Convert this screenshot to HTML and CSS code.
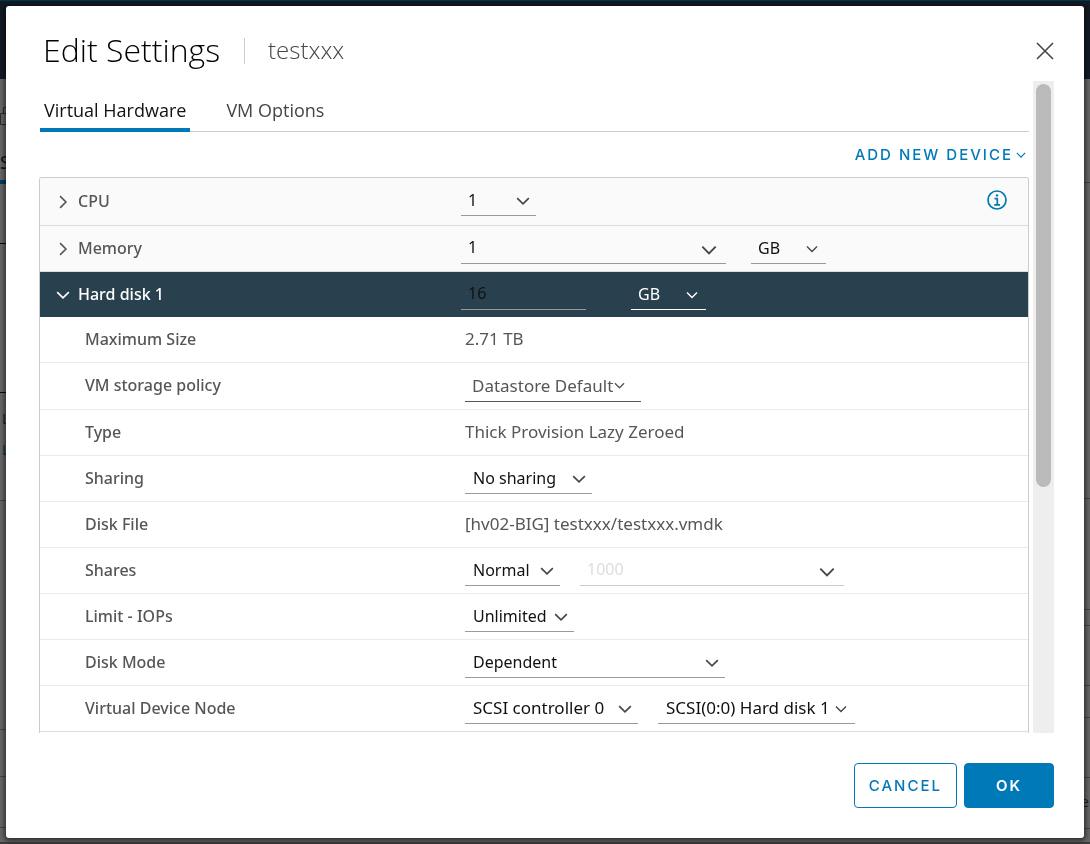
FILE: index.html
```html
<!DOCTYPE html>
<html lang="en">
<head>
<meta charset="utf-8">
<title>Edit Settings</title>
<link rel="stylesheet" href="styles.css">
</head>
<body>
<svg class="defs" aria-hidden="true">
  <symbol id="chevron" viewBox="0 0 12 12"><path d="M1 3.5l5 5 5-5" fill="none" stroke="currentColor" stroke-width="1.4"/></symbol>
</svg>

<div class="page" aria-hidden="true">
  <div class="page-header"></div>
  <div class="page-body">
    <div class="page-left">
      <svg class="page-icon" viewBox="0 0 12 24"><path d="M.5 9.5h12v11H.5zM3.5 9V3.5h9" fill="none" stroke="#2c2c2c"/></svg>
      <div class="page-tab">S</div>
      <div class="page-block rule-dark h-60"></div>
      <div class="page-block rule-dark h-149"></div>
      <div class="page-text">L</div>
      <div class="page-text page-link">L</div>
      <div class="page-block h-46"></div>
      <div class="page-block h-229"></div>
      <div class="page-block h-47"></div>
      <div class="page-block h-51"></div>
    </div>
    <div class="page-right">
      <div class="page-block h-104"></div>
      <div class="page-block h-316"></div>
      <div class="page-block h-111"></div>
      <div class="page-block h-16"></div>
      <div class="page-block h-60"></div>
      <div class="page-block h-32"></div>
      <div class="page-block h-60"></div>
      <div class="page-block page-cell h-51">e</div>
    </div>
  </div>
</div>

<div class="modal" role="dialog" aria-labelledby="title">
  <header class="modal-header">
    <h1 id="title" class="title">Edit Settings</h1>
    <span class="subtitle">testxxx</span>
    <button class="close" aria-label="Close">
      <svg viewBox="0 0 18 18"><path d="M1 1l16 16M17 1L1 17" fill="none" stroke="currentColor" stroke-width="1.6"/></svg>
    </button>
  </header>

  <div class="modal-body">
    <div class="content">
      <nav class="tabs">
        <button class="tab active">Virtual Hardware</button>
        <button class="tab">VM Options</button>
      </nav>
      <div class="toolbar">
        <button class="add">ADD NEW DEVICE<svg class="chev"><use href="#chevron"/></svg></button>
      </div>

      <div class="settings">
        <div class="row head cpu">
          <button class="expander" aria-label="Expand CPU"><svg class="chev side"><use href="#chevron"/></svg></button>
          <label class="name" for="cpu">CPU</label>
          <div class="value">
            <span class="field w-unit"><select id="cpu"><option>1</option></select><svg class="chev"><use href="#chevron"/></svg></span>
            <button class="info" aria-label="CPU information">
              <svg viewBox="0 0 20 20"><circle cx="10" cy="10" r="9" fill="none" stroke="currentColor" stroke-width="1.7"/><circle cx="10" cy="5.4" r="1.2" fill="currentColor"/><path d="M7.5 8.7H10.3V14.7M7.2 14.8H13" fill="none" stroke="currentColor" stroke-width="1.7"/></svg>
            </button>
          </div>
        </div>
        <div class="row head">
          <button class="expander" aria-label="Expand Memory"><svg class="chev side"><use href="#chevron"/></svg></button>
          <label class="name" for="memory">Memory</label>
          <div class="value">
            <span class="field combo w-memory"><input id="memory" type="text" value="1"><svg class="chev"><use href="#chevron"/></svg></span>
            <span class="field small w-unit"><select aria-label="Memory unit"><option>GB</option></select><svg class="chev"><use href="#chevron"/></svg></span>
          </div>
        </div>
        <div class="row head open">
          <button class="expander" aria-label="Collapse Hard disk 1"><svg class="chev"><use href="#chevron"/></svg></button>
          <label class="name" for="disk">Hard disk 1</label>
          <div class="value">
            <span class="field combo w-disk"><input id="disk" type="text" value="16"></span>
            <span class="field small w-unit"><select aria-label="Disk unit"><option>GB</option></select><svg class="chev"><use href="#chevron"/></svg></span>
          </div>
        </div>
        <div class="row">
          <span class="name">Maximum Size</span>
          <div class="value"><span class="text">2.71 TB</span></div>
        </div>
        <div class="row policy">
          <span class="name" id="policy">VM storage policy</span>
          <div class="value"><button class="dropdown w-policy" aria-describedby="policy">Datastore Default<svg class="chev"><use href="#chevron"/></svg></button></div>
        </div>
        <div class="row">
          <span class="name">Type</span>
          <div class="value"><span class="text">Thick Provision Lazy Zeroed</span></div>
        </div>
        <div class="row">
          <label class="name" for="sharing">Sharing</label>
          <div class="value"><span class="field w-sharing"><select id="sharing"><option>No sharing</option></select><svg class="chev"><use href="#chevron"/></svg></span></div>
        </div>
        <div class="row">
          <span class="name">Disk File</span>
          <div class="value"><span class="text">[hv02-BIG] testxxx/testxxx.vmdk</span></div>
        </div>
        <div class="row">
          <label class="name" for="shares">Shares</label>
          <div class="value">
            <span class="field w-shares"><select id="shares"><option>Normal</option></select><svg class="chev"><use href="#chevron"/></svg></span>
            <span class="field combo disabled w-amount"><input type="text" value="1000" aria-label="Shares value" disabled><svg class="chev"><use href="#chevron"/></svg></span>
          </div>
        </div>
        <div class="row">
          <label class="name" for="limit">Limit - IOPs</label>
          <div class="value"><span class="field w-limit"><select id="limit"><option>Unlimited</option></select><svg class="chev"><use href="#chevron"/></svg></span></div>
        </div>
        <div class="row">
          <label class="name" for="mode">Disk Mode</label>
          <div class="value"><span class="field w-mode"><select id="mode"><option>Dependent</option></select><svg class="chev"><use href="#chevron"/></svg></span></div>
        </div>
        <div class="row last">
          <label class="name" for="node">Virtual Device Node</label>
          <div class="value">
            <span class="field w-controller"><select id="node"><option>SCSI controller 0</option></select><svg class="chev"><use href="#chevron"/></svg></span>
            <span class="field small w-slot"><select aria-label="Device slot"><option>SCSI(0:0) Hard disk 1</option></select><svg class="chev"><use href="#chevron"/></svg></span>
          </div>
        </div>
      </div>
    </div>
    <div class="scrollbar"><div class="thumb"></div></div>
  </div>

  <footer class="modal-footer">
    <button class="btn">CANCEL</button>
    <button class="btn primary">OK</button>
  </footer>
</div>
</body>
</html>
```
FILE: styles.css
```css
* { box-sizing: border-box; }
body {
  margin: 0;
  height: 100vh;
  overflow: hidden;
  font-family: "Noto Sans", "Open Sans", sans-serif;
  font-size: 16px;
  line-height: 24px;
  color: #565656;
}
button, input, select { font: inherit; color: inherit; margin: 0; padding: 0; border: 0; background: none; border-radius: 0; outline: 0; }
.defs { position: absolute; width: 0; height: 0; }

/* dimmed page behind the dialog */
.page { height: 100vh; display: flex; flex-direction: column; background: #666; }
.page-header { height: 79px; flex: none; background: #121b24; border-top: 1px solid #00344f; }
.page-body { flex: 1; display: flex; justify-content: space-between; overflow: hidden; border-bottom: 2px solid #3c3c3c; }
.page-left { width: 50%; }
.page-right { width: 9px; }
.page-icon { display: block; width: 12px; height: 24px; margin: 25px 0 22px; }
.page-tab { width: 40px; height: 34px; color: #111; font-size: 18px; border-bottom: 4px solid #003d5c; }
.page-block { border-bottom: 1px solid #444; color: #222; }
.page-block.rule-dark { border-color: #0a0a0a; }
.page-text { height: 31px; padding: 14px 0 0 2px; color: #222; font-size: 14px; }
.page-link { color: #00344f; }
.page-cell { padding-top: 12px; font-size: 14px; }
.h-16 { height: 16px; }
.h-32 { height: 32px; }
.h-46 { height: 46px; }
.h-47 { height: 47px; }
.h-51 { height: 51px; }
.h-60 { height: 60px; }
.h-104 { height: 104px; }
.h-111 { height: 111px; }
.h-149 { height: 149px; }
.h-229 { height: 229px; }
.h-316 { height: 316px; }

/* dialog */
.modal {
  position: fixed;
  inset: 6px;
  display: flex;
  flex-direction: column;
  padding: 0 30px 30px 33px;
  background: #fff;
  border-radius: 3px;
  box-shadow: 0 1px 4px 2px rgba(0, 0, 0, .5);
}
.modal-header { flex: none; height: 75px; display: flex; align-items: center; padding: 14px 0 0 4px; font-family: "Open Sans", sans-serif; }
.title { margin: 0; padding-bottom: 2px; font-size: 32px; line-height: 40px; font-weight: 300; color: #000; }
.subtitle { margin-left: 24px; padding: 0 0 2px 23px; border-left: 1px solid #ccc; font-size: 24px; line-height: 24px; font-weight: 300; color: #454545; }
.close { margin-left: auto; width: 18px; height: 18px; color: #454545; }
.close svg { display: block; }

.modal-body { flex: 1; min-height: 0; display: flex; gap: 4px; }
.content { flex: 1; min-width: 0; overflow: hidden; }
.scrollbar { flex: none; width: 21px; padding: 3px; background: #eee; }
.thumb { height: 62%; min-height: 403px; border-radius: 8px; background: #bababa; }

.tabs { display: flex; gap: 32px; height: 51px; margin-left: 1px; box-shadow: inset 0 -1px #ccc; font-family: "Open Sans", sans-serif; }
.tab { padding: 6px 4px 0; font-size: 18px; color: #454545; }
.tab.active { color: #111; border-bottom: 4px solid #0079b8; padding-top: 10px; }
.toolbar { height: 45px; display: flex; justify-content: flex-end; }
.add { display: flex; align-items: center; gap: 3px; padding-right: 3px; color: #0079b8; font-family: "Inter", sans-serif; font-size: 15px; font-weight: 500; letter-spacing: 2px; }
.add .chev { width: 10px; height: 10px; }

.settings { border: 1px solid #ccc; border-bottom: 0; border-radius: 3px 3px 0 0; overflow: hidden; padding-bottom: 24px; }
.row { display: flex; height: 46px; border-bottom: 1px solid #eaeaea; }
.row.policy { height: 47px; }
.row.last { border-color: #ddd; }
.row.last select { font-size: 17px; }
.name { width: 425px; flex: none; padding: 0 0 2px 45px; align-self: center; font-weight: 500; }
.value { flex: 1; display: flex; align-items: flex-end; gap: 20px; padding-bottom: 7px; }
.text { padding-bottom: 4px; font-size: 17px; }
.row.head { background: #fafafa; border-color: #ddd; }
.row.head .name { width: 383px; padding-left: 0; }
.row.head .value { gap: 25px; }
.row.cpu { height: 48px; }
.row.cpu .value { padding-bottom: 9px; }
.row.head.open { height: 45px; border: 0; background: #29404e; color: #fff; }
.row.head.open .value { gap: 45px; }
.expander { width: 38px; flex: none; display: flex; align-items: center; padding-left: 16px; }

.chev { display: block; width: 14px; height: 14px; flex: none; }
.chev.side { transform: rotate(-90deg); }
.field { display: grid; grid-template-columns: 1fr auto; align-items: center; height: 30px; border-bottom: 1px solid #9a9a9a; color: #111; }
.field select { appearance: none; grid-area: 1 / 1 / 2 / 3; width: 100%; height: 28px; align-self: start; padding-left: 8px; line-height: 24px; }
.head .field select { padding-left: 7px; }
.field .chev { grid-area: 1 / 2; pointer-events: none; margin-right: 6px; color: #454545; }
.field.small .chev { width: 12px; height: 12px; margin-right: 8px; }
.field.combo .chev { width: 16px; height: 16px; margin: 2px 9px 0 0; }
.field input { grid-area: 1 / 1 / 2 / 3; width: 100%; height: 26px; padding-left: 7px; align-self: start; }
.open .field.small { color: #fff; border-color: #fff; }
.open .field.small .chev { color: #fff; }
.field.disabled { border-color: #ccc; }
.field.disabled input { color: #ddd; }
.w-unit { width: 75px; }
.w-memory { width: 265px; }
.w-disk { width: 125px; }
.w-policy { width: 176px; }
.w-sharing { width: 127px; }
.w-shares { width: 95px; }
.w-amount { width: 264px; }
.w-limit { width: 109px; }
.w-mode { width: 260px; }
.w-controller { width: 173px; }
.w-slot { width: 197px; }
.dropdown { display: flex; align-items: center; gap: 1px; height: 30px; padding: 0 0 2px 7px; border-bottom: 1px solid #565656; font-size: 17px; white-space: nowrap; }
.dropdown .chev { width: 11px; height: 11px; }
.info { margin: 0 21px 6px auto; width: 20px; height: 20px; color: #0079ad; }
.info svg { display: block; }

.modal-footer { flex: none; display: flex; justify-content: flex-end; gap: 7px; padding-top: 30px; }
.btn { height: 45px; min-width: 90px; padding: 0 14px; border: 1px solid #0079b8; border-radius: 4px; color: #0079b8; font-family: "Inter", sans-serif; font-size: 15px; font-weight: 500; letter-spacing: 2px; }
.btn.primary { background: #0079b8; color: #fff; font-weight: 600; }
```
